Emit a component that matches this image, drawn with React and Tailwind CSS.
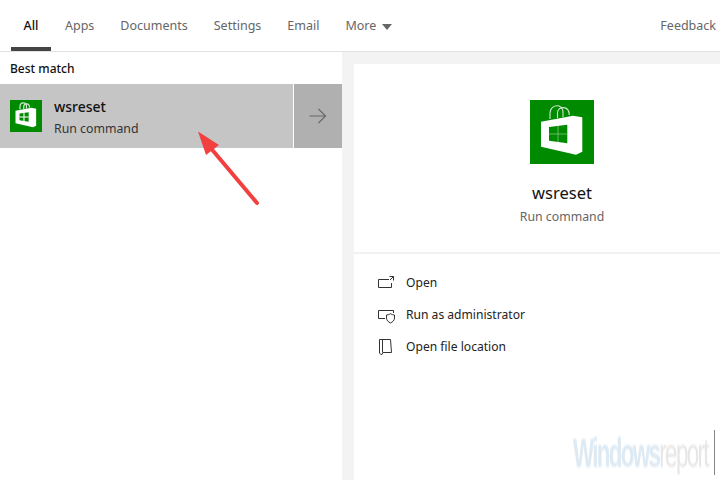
import React from 'react';

const tabs = ['Apps', 'Documents', 'Settings', 'Email'];

function StoreIcon({ className, line = 1.1, cross = 0.7, crossColor = '#8fcb8f' }) {
    return (
        <div className={`bg-[#008a00] shrink-0 ${className}`}>
            <svg viewBox="0 0 64 64" className="w-full h-full">
                <path d="M20 19 V13 C20 4 33 3 33 12 V17" fill="none" stroke="#cfe8cf" strokeWidth={line} />
                <path d="M27.5 18 V13 C27.5 6 39 5 39.3 15" fill="none" stroke="#cfe8cf" strokeWidth={line} />
                <path
                    fillRule="evenodd"
                    fill="#fff"
                    d="M11 21.7 L43 15.7 L52.3 17.3 V51.7 L46 54.7 L11 46.7 Z M19 27 L37.3 24.7 V43.3 L19 40.7 Z"
                />
                <path d="M28 26 V42 M19 34 H37.3" stroke={crossColor} strokeWidth={cross} />
            </svg>
        </div>
    );
}

function ActionRow({ icon, label }) {
    return (
        <div className="flex items-center h-8 pl-[22px] text-[12.1px] text-[#222]">
            <svg viewBox="0 0 20 20" className="w-5 h-5 mr-[10px] shrink-0" fill="none" stroke="#333" strokeWidth="1">
                {icon}
            </svg>
            <span>{label}</span>
        </div>
    );
}

export default function App() {
    return (
        <div className="relative w-[720px] h-[480px] overflow-hidden bg-white font-['Noto_Sans','Open_Sans',sans-serif]">
            {/* tabs */}
            <header className="flex items-center justify-between h-[52px] border-b border-[#e2e2e2] text-[12.5px] text-[#666]">
                <div className="flex items-stretch h-[51px] pl-[11px]">
                    <div className="flex items-center justify-center w-10 border-b-4 border-[#444] pt-[6px] text-[#111] font-medium">All</div>
                    <div className="flex items-center gap-[26px] ml-[14px] pt-[2px]">
                        {tabs.map(t => <span key={t}>{t}</span>)}
                        <span className="flex items-center gap-[6px]">
                            More
                            <svg width="10" height="6" viewBox="0 0 10 6"><path d="M0 0 H10 L5 6 Z" fill="#666" /></svg>
                        </span>
                    </div>
                </div>
                <span className="pr-1 pt-[2px]">Feedback</span>
            </header>

            <div className="flex h-[428px]">
                {/* results */}
                <div className="w-[342px] shrink-0">
                    <p className="h-8 pt-2 pl-[10px] text-[12px] leading-[18px] font-medium text-[#111]">Best match</p>
                    <div className="flex h-16 bg-[#c5c5c5]">
                        <div className="flex items-center flex-1 pl-[10px]">
                            <StoreIcon className="w-8 h-8" line={2.4} cross={2.2} crossColor="#fff" />
                            <div className="ml-3 pt-1">
                                <div className="text-[14px] leading-5 font-medium text-[#111]">wsreset</div>
                                <div className="text-[12.3px] leading-5 mt-[2px] text-[#333]">Run command</div>
                            </div>
                        </div>
                        <div className="flex items-center justify-center w-[49px] border-l border-white bg-[#b0b0b0]">
                            <svg width="18" height="16" viewBox="0 0 18 16" fill="none" stroke="#666" strokeWidth="1.1">
                                <path d="M0.5 8 H16.5 M9.5 1 L16.5 8 L9.5 15" />
                            </svg>
                        </div>
                    </div>
                </div>

                {/* preview, wider than the window so its centred head sits right of the middle */}
                <div className="flex-1 overflow-hidden bg-[#f3f3f3] pt-3 pl-3">
                    <div className="w-[416px] h-full bg-white">
                        <div className="flex flex-col items-center h-[190px] pt-9 border-b-2 border-[#f2f2f2]">
                            <StoreIcon className="w-16 h-16" />
                            <div className="mt-[17px] text-[16.5px] leading-6 text-[#111]">wsreset</div>
                            <div className="mt-[2px] text-[12.3px] leading-5 text-[#666]">Run command</div>
                        </div>
                        <div className="pt-[13px]">
                            <ActionRow
                                label="Open"
                                icon={<path d="M13 6.5 H2.5 V14.5 H15.5 V10 M13.5 3.5 H17.5 V7.5 M17.5 3.5 L14 7" />}
                            />
                            <ActionRow
                                label="Run as administrator"
                                icon={<path d="M9 13.5 H2.5 V5.5 H17.5 V8 M10.5 10 C12 10 13.5 9.5 14.5 8.7 C15.5 9.5 17 10 18.5 10 V13 C18.5 15.5 16.5 17 14.5 18 C12.5 17 10.5 15.5 10.5 13 Z" />}
                            />
                            <ActionRow
                                label="Open file location"
                                icon={<path d="M3.5 2.5 H14.5 L15.5 15.5 H7 L5.5 18 L3.5 16 Z M6.5 2.5 V15.5" />}
                            />
                        </div>
                    </div>
                </div>
            </div>

            {/* annotation arrow */}
            <svg className="absolute left-[190px] top-[120px]" width="80" height="95" viewBox="0 0 80 95">
                <path d="M67 83 L19 26" stroke="#f23f3f" strokeWidth="4" strokeLinecap="round" />
                <path d="M8 11.5 L29 25 L16 35 Z" fill="#f23f3f" />
            </svg>

            {/* watermark */}
            <div className="absolute left-[573px] top-[430px] w-[142px] h-[45px] flex items-center border-r border-[#888] overflow-hidden">
                <span className="font-['Liberation_Sans',sans-serif] text-[40px] tracking-[-3px] scale-x-[0.56] origin-left blur-[1px] font-bold text-[#dde9f3] whitespace-nowrap">
                    Windows<span className="font-normal text-[#e6e6e6]">report</span>
                </span>
            </div>
        </div>
    );
}
